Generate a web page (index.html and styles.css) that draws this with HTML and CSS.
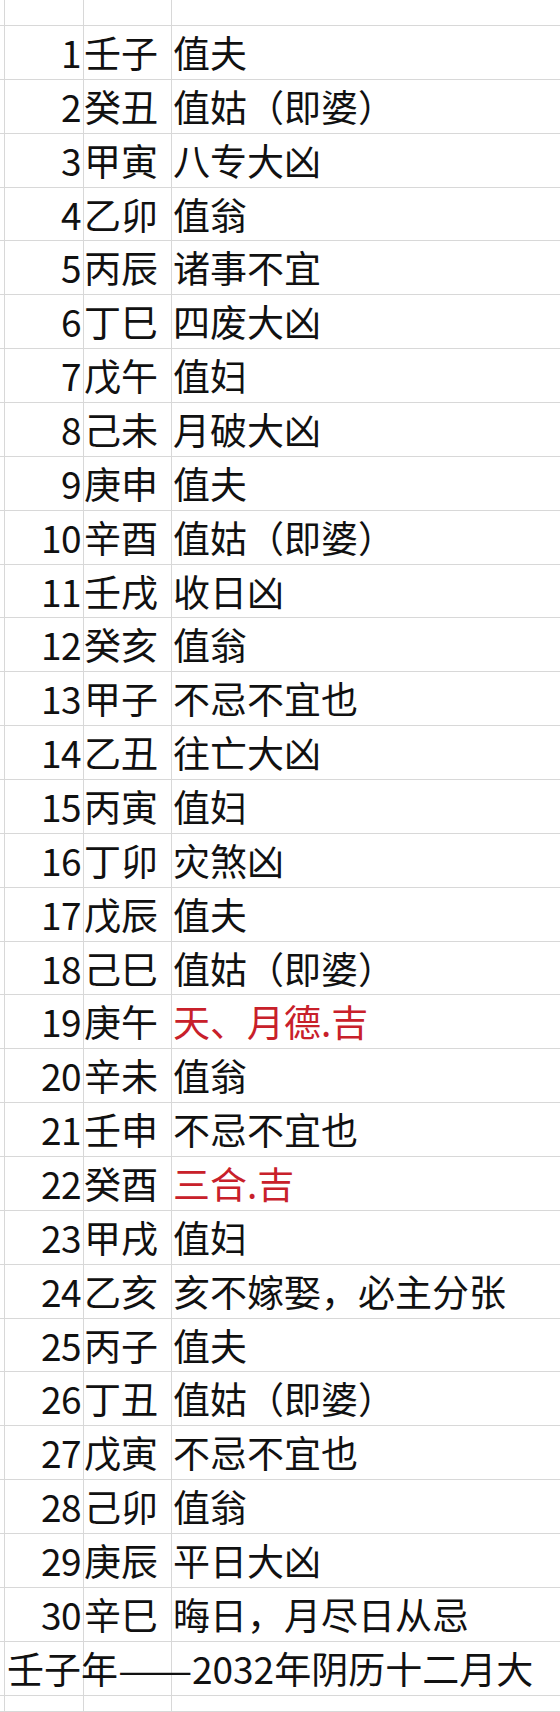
FILE: index.html
```html
<!DOCTYPE html>
<html lang="zh-CN">
<head>
<meta charset="utf-8">
<title>壬子年 2032年阴历十二月</title>
<link rel="stylesheet" href="styles.css">
</head>
<body>
<div class="sheet">
  <div class="c c0"></div><div class="c num"></div><div class="c gz"></div><div class="c txt"></div>

  <div class="c c0"></div><div class="c num">1</div><div class="c gz">壬子</div><div class="c txt">值夫</div>
  <div class="c c0"></div><div class="c num">2</div><div class="c gz">癸丑</div><div class="c txt">值姑（即婆）</div>
  <div class="c c0"></div><div class="c num">3</div><div class="c gz">甲寅</div><div class="c txt">八专大凶</div>
  <div class="c c0"></div><div class="c num">4</div><div class="c gz">乙卯</div><div class="c txt">值翁</div>
  <div class="c c0"></div><div class="c num">5</div><div class="c gz">丙辰</div><div class="c txt">诸事不宜</div>
  <div class="c c0"></div><div class="c num">6</div><div class="c gz">丁巳</div><div class="c txt">四废大凶</div>
  <div class="c c0"></div><div class="c num">7</div><div class="c gz">戊午</div><div class="c txt">值妇</div>
  <div class="c c0"></div><div class="c num">8</div><div class="c gz">己未</div><div class="c txt">月破大凶</div>
  <div class="c c0"></div><div class="c num">9</div><div class="c gz">庚申</div><div class="c txt">值夫</div>
  <div class="c c0"></div><div class="c num">10</div><div class="c gz">辛酉</div><div class="c txt">值姑（即婆）</div>
  <div class="c c0"></div><div class="c num">11</div><div class="c gz">壬戌</div><div class="c txt">收日凶</div>
  <div class="c c0"></div><div class="c num">12</div><div class="c gz">癸亥</div><div class="c txt">值翁</div>
  <div class="c c0"></div><div class="c num">13</div><div class="c gz">甲子</div><div class="c txt">不忌不宜也</div>
  <div class="c c0"></div><div class="c num">14</div><div class="c gz">乙丑</div><div class="c txt">往亡大凶</div>
  <div class="c c0"></div><div class="c num">15</div><div class="c gz">丙寅</div><div class="c txt">值妇</div>
  <div class="c c0"></div><div class="c num">16</div><div class="c gz">丁卯</div><div class="c txt">灾煞凶</div>
  <div class="c c0"></div><div class="c num">17</div><div class="c gz">戊辰</div><div class="c txt">值夫</div>
  <div class="c c0"></div><div class="c num">18</div><div class="c gz">己巳</div><div class="c txt">值姑（即婆）</div>
  <div class="c c0"></div><div class="c num">19</div><div class="c gz">庚午</div><div class="c txt red">天、月德.吉</div>
  <div class="c c0"></div><div class="c num">20</div><div class="c gz">辛未</div><div class="c txt">值翁</div>
  <div class="c c0"></div><div class="c num">21</div><div class="c gz">壬申</div><div class="c txt">不忌不宜也</div>
  <div class="c c0"></div><div class="c num">22</div><div class="c gz">癸酉</div><div class="c txt red">三合.吉</div>
  <div class="c c0"></div><div class="c num">23</div><div class="c gz">甲戌</div><div class="c txt">值妇</div>
  <div class="c c0"></div><div class="c num">24</div><div class="c gz">乙亥</div><div class="c txt">亥不嫁娶，必主分张</div>
  <div class="c c0"></div><div class="c num">25</div><div class="c gz">丙子</div><div class="c txt">值夫</div>
  <div class="c c0"></div><div class="c num">26</div><div class="c gz">丁丑</div><div class="c txt">值姑（即婆）</div>
  <div class="c c0"></div><div class="c num">27</div><div class="c gz">戊寅</div><div class="c txt">不忌不宜也</div>
  <div class="c c0"></div><div class="c num">28</div><div class="c gz">己卯</div><div class="c txt">值翁</div>
  <div class="c c0"></div><div class="c num">29</div><div class="c gz">庚辰</div><div class="c txt">平日大凶</div>
  <div class="c c0"></div><div class="c num">30</div><div class="c gz">辛巳</div><div class="c txt">晦日，月尽日从忌</div>

  <div class="c c0"></div><div class="c num foot"><span class="seg">壬子年</span><span class="dash">——</span><span class="seg">2032年阴历十二月大</span></div><div class="c gz"></div><div class="c txt"></div>

  <div class="c c0"></div><div class="c num"></div><div class="c gz"></div><div class="c txt"></div>
</div>
</body>
</html>
```

FILE: styles.css
```css
html, body {
  margin: 0;
  padding: 0;
  background: #ffffff;
}

body {
  font-family: "Noto Sans CJK SC", "Noto Sans", sans-serif;
  color: #111111;
  width: 560px;
  height: 1712px;
  overflow: hidden;
}

.sheet {
  display: grid;
  grid-template-columns: 5px 79px 88px 1fr;
  grid-template-rows: 26px repeat(31, 53.87px) 1fr;
  height: 1712px;
}

.c {
  box-sizing: border-box;
  border-right: 1px solid #d8d8d8;
  border-bottom: 1px solid #d8d8d8;
  font-size: 37px;
  line-height: 1;
  display: flex;
  align-items: center;
  white-space: nowrap;
  min-width: 0;
}

.txt {
  border-right: none;
  padding-left: 1px;
}

.num {
  justify-content: flex-end;
  padding-right: 2px;
  letter-spacing: -0.5px;
}

.gz {
  padding-left: 0;
  letter-spacing: 0;
}

.red {
  color: #c8202a;
}

.foot {
  justify-content: flex-start;
  padding-left: 2px;
  letter-spacing: 0;
  overflow: visible;
}

.seg {
  flex-shrink: 0;
}

.dash {
  flex-shrink: 0;
  display: inline-block;
  width: 2em;
  transform: scaleX(1.2);
  transform-origin: left center;
}
```
